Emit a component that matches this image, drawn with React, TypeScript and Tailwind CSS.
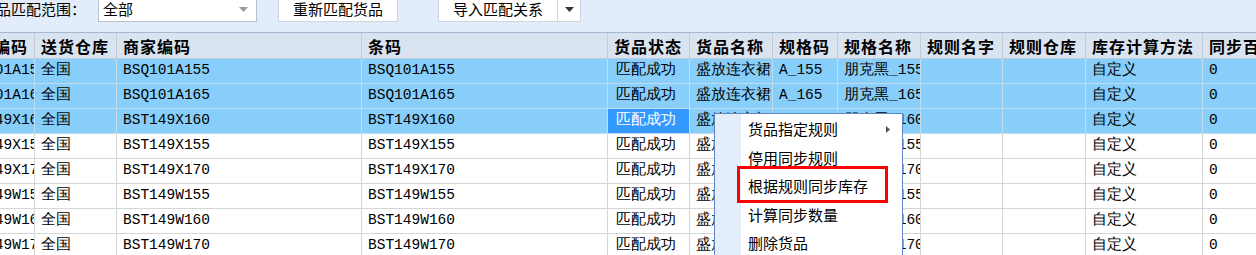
import React from "react";

const columns = [
  { title: "货品编码", w: "w-[81px]" },
  { title: "送货仓库", w: "w-[82px]" },
  { title: "商家编码", w: "w-[245px]" },
  { title: "条码", w: "w-[246px]" },
  { title: "货品状态", w: "w-[82px]" },
  { title: "货品名称", w: "w-[83px]" },
  { title: "规格码", w: "w-[65px]" },
  { title: "规格名称", w: "w-[83px]" },
  { title: "规则名字", w: "w-[82px]" },
  { title: "规则仓库", w: "w-[83px]" },
  { title: "库存计算方法", w: "w-[117px]" },
  { title: "同步百分比", w: "w-[100px]" },
];

const rows = [
  { code: "BSQ101A155", spec: "A_155", specName: "朋克黑_155" },
  { code: "BSQ101A165", spec: "A_165", specName: "朋克黑_165" },
  { code: "BST149X160", spec: "X_160", specName: "朋克黑_160" },
  { code: "BST149X155", spec: "X_155", specName: "朋克黑_155" },
  { code: "BST149X170", spec: "X_170", specName: "朋克黑_170" },
  { code: "BST149W155", spec: "W_155", specName: "朋克黑_155" },
  { code: "BST149W160", spec: "W_160", specName: "朋克黑_160" },
  { code: "BST149W170", spec: "W_170", specName: "朋克黑_170" },
];

const menuItems = ["货品指定规则", "停用同步规则", "根据规则同步库存", "计算同步数量", "删除货品"];

export default function App() {
  return (
    <div className="relative w-[1256px] h-[255px] overflow-hidden bg-white text-black font-['Noto_Sans_CJK_SC',sans-serif]">
      {/* toolbar */}
      <div className="h-[33px] bg-[#e2ecfa] border-b border-[#a7b7d0] overflow-hidden">
        <div className="-mt-[4px] flex items-center h-[26px] text-[15px]">
          <span className="-ml-[19px] w-[117px] whitespace-nowrap">货品匹配范围：</span>
          <div className="w-[159px] h-[26px] bg-white border border-[#b8c2cf] flex items-center justify-between pl-[4px] pr-[8px]">
            <span>全部</span>
            <svg width="9" height="5" viewBox="0 0 9 5">
              <path d="M0 0h9L4.5 5z" fill="#9a9a9a" />
            </svg>
          </div>
          <button className="ml-[21px] w-[120px] h-[26px] bg-white border border-[#cfd6df] flex items-center justify-center">
            重新匹配货品
          </button>
          <div className="ml-[40px] h-[26px] bg-white border border-[#cfd6df] flex">
            <button className="w-[119px] h-full flex items-center justify-center border-r border-[#cfd6df]">
              导入匹配关系
            </button>
            <button className="w-[22px] h-full flex items-center justify-center">
              <svg width="9" height="5" viewBox="0 0 9 5">
                <path d="M0 0h9L4.5 5z" fill="#333" />
              </svg>
            </button>
          </div>
        </div>
      </div>

      {/* grid, scrolled a little to the right */}
      <div className="overflow-hidden">
        <div className="-ml-[46px] w-max">
          <div className="flex h-[26px] bg-[#dae3f0] border-b border-[#c3cbd6] text-[16px] font-bold tracking-[1px]">
            {columns.map((c) => (
              <div
                key={c.title}
                className={`${c.w} h-full px-[6px] flex items-center overflow-hidden whitespace-nowrap border-r border-[#c3cbd6]`}
              >
                {c.title}
              </div>
            ))}
          </div>
          <div className="text-[14.5px] font-['Liberation_Mono','DejaVu_Sans_Mono',monospace]">
            {rows.map((r, i) => {
              const cells = [
                r.code,
                "全国",
                r.code,
                r.code,
                "匹配成功",
                "盛放连衣裙",
                r.spec,
                r.specName,
                "",
                "",
                "自定义",
                "0",
              ];
              return (
                <div
                  key={i}
                  className={`flex h-[25px] border-b ${i < 3 ? "bg-[#87cefa] border-[#c2dcee]" : "bg-white border-[#d6d6d6]"}`}
                >
                  {cells.map((v, j) => (
                    <div
                      key={j}
                      className={`${columns[j].w} h-full px-[6px] flex items-center overflow-hidden whitespace-nowrap border-r ${
                        i < 3 ? "border-[#c2dcee]" : "border-[#d6d6d6]"
                      } ${i === 2 && j === 4 ? "bg-[#3399ff] text-white" : ""} ${j === 4 ? "pl-[8px]" : ""}`}
                    >
                      {v}
                    </div>
                  ))}
                </div>
              );
            })}
          </div>
        </div>
      </div>

      {/* context menu */}
      <div className="absolute left-[714px] top-[113px] w-[189px] h-[160px] bg-white border border-[#5b86c8] flex text-[15px]">
        <div className="w-[26px] bg-[#e4edfa]" />
        <div className="flex-1 pt-[1px]">
          {menuItems.map((m, i) => (
            <div key={m} className="h-[28.5px] flex items-center justify-between pl-[7px] pr-[12px]">
              <span>{m}</span>
              {i === 0 && (
                <svg width="4" height="7" viewBox="0 0 4 7">
                  <path d="M0 0l4 3.5L0 7z" fill="#555" />
                </svg>
              )}
            </div>
          ))}
        </div>
      </div>

      {/* annotation */}
      <div className="absolute left-[737px] top-[166px] w-[151px] h-[37px] border-[3px] border-[#ff0000]" />
    </div>
  );
}
